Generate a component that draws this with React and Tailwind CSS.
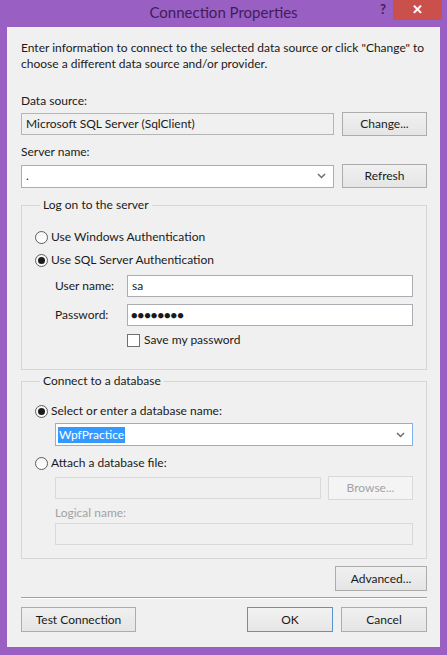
import React from 'react'

const font = { fontFamily: '"Segoe UI", Lato, "Noto Sans", sans-serif' }

function Button({ children, className = '', primary = false, disabled = false }) {
  return (
    <div
      className={
        'flex items-center justify-center border text-[12px] ' +
        (disabled
          ? 'border-[#d9d9d9] bg-[#f4f4f4] text-[#a3a3a3] '
          : primary
          ? 'border-[#5a94cc] bg-gradient-to-b from-[#f2f2f2] to-[#e6e6e6] text-[#1a1a1a] '
          : 'border-[#acacac] bg-gradient-to-b from-[#f0f0f0] to-[#e5e5e5] text-[#1a1a1a] ') +
        className
      }
    >
      {children}
    </div>
  )
}

function Radio({ checked }) {
  return (
    <div className="flex h-[13px] w-[13px] items-center justify-center rounded-full border border-[#5e5e5e] bg-gradient-to-b from-[#f4f4f4] to-[#ffffff]">
      {checked && <div className="h-[7px] w-[7px] rounded-full bg-[#1c1c1c]" />}
    </div>
  )
}

function Chevron() {
  return (
    <svg width="9" height="6" viewBox="0 0 9 6" className="mr-[7px]">
      <path d="M1 1 L4.5 4.5 L8 1" fill="none" stroke="#6d6d6d" strokeWidth="1.5" />
    </svg>
  )
}

export default function App() {
  return (
    <div className="flex h-[655px] w-[447px] flex-col bg-[#9a5fc3] text-[12px] text-[#1a1a1a]" style={font}>
      {/* Title bar */}
      <div className="flex h-[27px] items-start">
        <div className="flex h-[25px] flex-1 items-center justify-center pl-[74px] text-[15px] text-[#3f1d5c]">
          Connection Properties
        </div>
        <div className="mt-[1px] w-[20px] text-center text-[13px] font-bold leading-[16px] text-[#3f1d5c]">?</div>
        <div className="mr-[5px] flex h-[20px] w-[49px] items-center justify-center bg-[#c9504b] text-[13px] font-bold text-white">
          ✕
        </div>
      </div>

      {/* Client area */}
      <div className="mx-[7px] flex flex-1 flex-col bg-[#f0f0f0] pl-[14px] pr-[13px] leading-[16px]">
        <p className="mt-[13px]">
          Enter information to connect to the selected data source or click "Change" to choose a different data
          source and/or provider.
        </p>

        <div className="mt-[21px]">Data source:</div>
        <div className="mt-[3px] flex h-[24px] items-center justify-between">
          <div className="flex h-[22px] w-[313px] items-center border border-[#b5b5b5] bg-[#f0f0f0] px-[4px]">
            Microsoft SQL Server (SqlClient)
          </div>
          <Button className="h-[24px] w-[85px]">Change...</Button>
        </div>

        <div className="mt-[8px]">Server name:</div>
        <div className="mt-[4px] flex h-[24px] items-center justify-between">
          <div className="flex h-[23px] w-[313px] items-center justify-between border border-[#abadb3] bg-white pl-[4px]">
            <span>.</span>
            <Chevron />
          </div>
          <Button className="h-[24px] w-[85px]">Refresh</Button>
        </div>

        {/* Log on group */}
        <fieldset className="mt-[9px] border border-[#d5d5d5] pb-[21px] pl-[13px] pr-[13px]">
          <legend className="ml-[5px] px-[3px]">Log on to the server</legend>
          <div className="mt-[16px] flex h-[16px] items-center gap-[3px]">
            <Radio />
            <span>Use Windows Authentication</span>
          </div>
          <div className="mt-[7px] flex h-[16px] items-center gap-[3px]">
            <Radio checked />
            <span>Use SQL Server Authentication</span>
          </div>
          <div className="mt-[7px] flex h-[22px] items-center pl-[20px]">
            <span className="w-[72px]">User name:</span>
            <div className="flex h-[22px] flex-1 items-center border border-[#abadb3] bg-white px-[4px]">sa</div>
          </div>
          <div className="mt-[7px] flex h-[22px] items-center pl-[20px]">
            <span className="w-[72px]">Password:</span>
            <div className="flex h-[22px] flex-1 items-center border border-[#abadb3] bg-white px-[3px] text-[11px] tracking-[0px]">
              ●●●●●●●●
            </div>
          </div>
          <div className="mt-[6px] flex h-[16px] items-center gap-[4px] pl-[92px]">
            <div className="h-[13px] w-[13px] border border-[#707070] bg-white" />
            <span>Save my password</span>
          </div>
        </fieldset>

        {/* Database group */}
        <fieldset className="mt-[3px] border border-[#d5d5d5] pb-[13px] pl-[13px] pr-[13px]">
          <legend className="ml-[5px] px-[3px]">Connect to a database</legend>
          <div className="mt-[14px] flex h-[16px] items-center gap-[3px]">
            <Radio checked />
            <span>Select or enter a database name:</span>
          </div>
          <div className="ml-[20px] mt-[4px] flex h-[23px] items-center justify-between border border-[#7eb4ea] bg-white pl-[2px]">
            <span className="bg-[#3399ff] px-[1px] text-white">WpfPractice</span>
            <Chevron />
          </div>
          <div className="mt-[9px] flex h-[16px] items-center gap-[3px]">
            <Radio />
            <span>Attach a database file:</span>
          </div>
          <div className="ml-[20px] mt-[5px] flex h-[24px] items-center justify-between">
            <div className="h-[22px] w-[266px] border border-[#d9d9d9] bg-[#f0f0f0]" />
            <Button disabled className="h-[24px] w-[85px]">
              Browse...
            </Button>
          </div>
          <div className="ml-[20px] mt-[5px] text-[#a3a3a3]">Logical name:</div>
          <div className="ml-[20px] mt-[2px] h-[22px] border border-[#d9d9d9] bg-[#f0f0f0]" />
        </fieldset>

        <div className="mt-[7px] flex justify-end">
          <Button className="h-[25px] w-[92px]">Advanced...</Button>
        </div>

        <div className="mt-[6px] h-[2px] border-t border-b border-t-[#a0a0a0] border-b-white" />

        <div className="mt-[8px] flex items-center">
          <Button className="h-[25px] w-[115px]">Test Connection</Button>
          <div className="flex-1" />
          <Button primary className="h-[25px] w-[86px]">
            OK
          </Button>
          <Button className="ml-[8px] h-[25px] w-[86px]">Cancel</Button>
        </div>
      </div>
      <div className="h-[8px]" />
    </div>
  )
}
